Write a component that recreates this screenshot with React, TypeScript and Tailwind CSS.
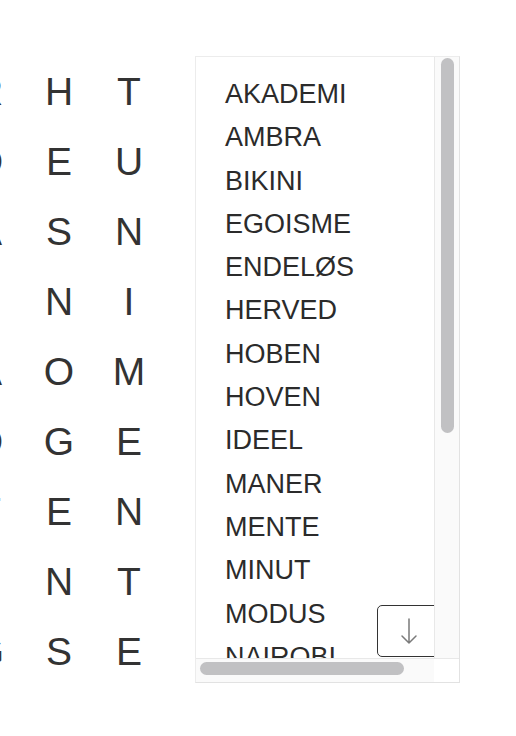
const letters = [
  ["R", "H", "T"],
  ["D", "E", "U"],
  ["A", "S", "N"],
  ["I", "N", "I"],
  ["A", "O", "M"],
  ["D", "G", "E"],
  ["T", "E", "N"],
  ["I", "N", "T"],
  ["G", "S", "E"],
];

const words = [
  "AKADEMI",
  "AMBRA",
  "BIKINI",
  "EGOISME",
  "ENDELØS",
  "HERVED",
  "HOBEN",
  "HOVEN",
  "IDEEL",
  "MANER",
  "MENTE",
  "MINUT",
  "MODUS",
  "NAIROBI",
  "OPERA",
  "SENIOR",
];

function LetterGrid() {
  return (
    <div className="ml-[-46px] mt-[57px] grid shrink-0 grid-cols-[repeat(3,70px)] auto-rows-[70px] text-center text-[39px] leading-[70px] text-[#333]">
      {letters.flat().map((letter, index) => (
        <div key={index}>{letter}</div>
      ))}
    </div>
  );
}

function WordList() {
  return (
    <div className="ml-[31px] mt-[56px] flex h-[627px] w-[265px] shrink-0 flex-col border border-[#ececec] border-r-[#e2e2e2] border-b-[#e2e2e2] bg-white">
      <div className="flex min-h-0 flex-1">
        <div className="relative min-w-0 flex-1 overflow-hidden pl-[29px] pt-[16px]">
          {words.map((word) => (
            <div key={word} className="whitespace-nowrap text-[27px] leading-[43.3px] text-[#2b2b2b]">
              {word}
            </div>
          ))}

          <button className="absolute left-[181px] top-[548px] flex h-[52px] w-[64px] items-center justify-center rounded-[5px] border-[1.5px] border-[#333] bg-white">
            <svg width="20" height="27" viewBox="0 0 20 27" fill="none">
              <path
                d="M10 1 V25 M3 18 L10 25 L17 18"
                stroke="#7a7a7a"
                strokeWidth="1.5"
                strokeLinecap="round"
                strokeLinejoin="round"
              />
            </svg>
          </button>
        </div>

        <div className="w-[25px] shrink-0 border-l border-[#e8e8e8] bg-[#fafafa] pl-[6px] pt-[1px]">
          <div className="h-[375px] w-[13px] rounded-full bg-[#c1c1c3]" />
        </div>
      </div>

      <div className="flex h-[24px] shrink-0 border-t border-[#e8e8e8] bg-[#fafafa]">
        <div className="flex-1 pl-[4px] pt-[3px]">
          <div className="h-[13px] w-[204px] rounded-full bg-[#c1c1c3]" />
        </div>
        <div className="w-[25px] shrink-0 bg-white" />
      </div>
    </div>
  );
}

export default function App() {
  return (
    <div className="flex h-[736px] items-start overflow-hidden bg-white font-['Liberation_Sans',Arial,sans-serif]">
      <LetterGrid />
      <WordList />
    </div>
  );
}
